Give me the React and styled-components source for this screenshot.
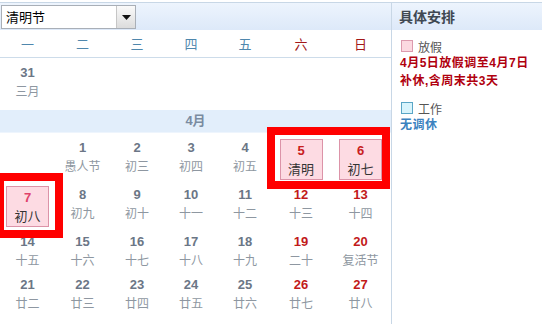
import React from "react";
import styled, { createGlobalStyle } from "styled-components";

const Global = createGlobalStyle`
  html, body { margin: 0; padding: 0; background: #fff; }
  body { font-family: "Liberation Sans", "Noto Sans CJK SC", sans-serif; }
`;

const Page = styled.div`
  width: 542px;
  height: 324px;
  overflow: hidden;
  padding-top: 2px;
  box-sizing: border-box;
  display: flex;
`;

const Frame = styled.div`
  display: flex;
  flex: 1;
  border-top: 1px solid #c8d7e6;
`;

const Calendar = styled.div`
  position: relative;
  width: 391px;
  flex: none;
  overflow: hidden;
`;

const Band = styled.div`
  height: 27px;
  background: linear-gradient(#edf4fd, #dde9f9);
  display: flex;
  align-items: flex-start;
  padding-top: ${(p) => p.$pt || 0}px;
  box-sizing: border-box;
`;

const Select = styled.div`
  margin-left: 1px;
  width: 135px;
  height: 24px;
  box-sizing: border-box;
  border: 1px solid #a9afb7;
  background: #fff;
  display: flex;
  align-items: stretch;
`;

const SelectText = styled.div`
  flex: 1;
  font-family: "Noto Sans CJK SC", sans-serif;
  font-size: 13px;
  line-height: 22px;
  padding-left: 4px;
  color: #000;
`;

const SelectButton = styled.div`
  width: 18px;
  border-left: 1px solid #c6c6c6;
  background: linear-gradient(#fafafa, #dcdcdc);
  display: flex;
  align-items: center;
  justify-content: center;
`;

const Grid = styled.div`
  display: grid;
  grid-template-columns: 55px 55px 54px 54px 54px 58px 61px;
  height: ${(p) => p.$h}px;
  box-sizing: border-box;
  border-bottom: ${(p) => (p.$line ? "1px solid #cddcea" : "none")};
`;

const WeekName = styled.div`
  text-align: center;
  font-family: "Noto Sans CJK SC", sans-serif;
  font-size: 13px;
  line-height: 27px;
  color: ${(p) => (p.$weekend ? "#a31818" : "#4f87ad")};
`;

const Cell = styled.div`
  display: flex;
  flex-direction: column;
  align-items: center;
  padding-top: 6px;
`;

const Num = styled.div`
  font-family: "Liberation Sans", sans-serif;
  font-weight: bold;
  font-size: 13px;
  line-height: 18px;
  color: ${(p) => (p.$red ? "#c21a1a" : "#6b7686")};
`;

const Lunar = styled.div`
  font-family: "Noto Sans CJK SC", sans-serif;
  font-size: 12px;
  line-height: 18px;
  color: #8e97a1;
  white-space: nowrap;
`;

const Holiday = styled.div`
  width: 43px;
  height: 41px;
  box-sizing: border-box;
  border: 1px solid #dc93a8;
  background: #fddbe3;
  display: flex;
  flex-direction: column;
  align-items: center;
  padding-top: 2px;
`;

const HolidayNum = styled(Num)`
  color: ${(p) => (p.$pink ? "#e0416a" : "#c8201e")};
`;

const HolidayLunar = styled(Lunar)`
  color: #333;
  font-size: 13px;
`;

const MonthBand = styled.div`
  height: 23px;
  background: #e2eefb;
  border-bottom: 1px solid #eef5fd;
  box-sizing: border-box;
  text-align: center;
  font-family: "Liberation Sans", "Noto Sans CJK SC", sans-serif;
  font-weight: bold;
  font-size: 13px;
  line-height: 22px;
  color: #7a8ba1;
`;

const Mark = styled.div`
  position: absolute;
  border: 8px solid #ff0000;
  box-sizing: border-box;
  pointer-events: none;
`;

const Side = styled.div`
  flex: 1;
  border-left: 1px solid #c8d7e6;
`;

const SideTitle = styled.div`
  padding-left: 7px;
  font-family: "Noto Sans CJK SC", sans-serif;
  font-weight: bold;
  font-size: 14px;
  line-height: 27px;
  color: #3f4852;
`;

const SideBody = styled.div`
  padding: 8px 6px 0 8px;
`;

const Legend = styled.div`
  display: flex;
  align-items: center;
  height: 16px;
  margin-top: ${(p) => p.$mt || 0}px;
  font-family: "Noto Sans CJK SC", sans-serif;
  font-size: 12px;
  color: #555;
`;

const Swatch = styled.span`
  width: 10px;
  height: 10px;
  margin: 0 5px 0 1px;
  border: 1px solid ${(p) => (p.$work ? "#5aa6c6" : "#dc9aae")};
  background: ${(p) => (p.$work ? "#d8f4fc" : "#fcd9e1")};
`;

const Note = styled.div`
  font-family: "Liberation Sans", "Noto Sans CJK SC", sans-serif;
  font-weight: bold;
  font-size: 12px;
  line-height: 18px;
  letter-spacing: 0.5px;
  white-space: nowrap;
  color: ${(p) => (p.$blue ? "#3b82bf" : "#b0000e")};
`;

const weekNames = ["一", "二", "三", "四", "五", "六", "日"];

const rows = [
  {
    h: 47,
    cells: [
      null,
      { n: "1", l: "愚人节" },
      { n: "2", l: "初三" },
      { n: "3", l: "初四" },
      { n: "4", l: "初五" },
      { n: "5", l: "清明", hol: true },
      { n: "6", l: "初七", hol: true },
    ],
  },
  {
    h: 47,
    cells: [
      { n: "7", l: "初八", hol: true, pink: true },
      { n: "8", l: "初九" },
      { n: "9", l: "初十" },
      { n: "10", l: "十一" },
      { n: "11", l: "十二" },
      { n: "12", l: "十三", red: true },
      { n: "13", l: "十四", red: true },
    ],
  },
  {
    h: 43,
    cells: [
      { n: "14", l: "十五" },
      { n: "15", l: "十六" },
      { n: "16", l: "十七" },
      { n: "17", l: "十八" },
      { n: "18", l: "十九" },
      { n: "19", l: "二十", red: true },
      { n: "20", l: "复活节", red: true },
    ],
  },
  {
    h: 54,
    cells: [
      { n: "21", l: "廿二" },
      { n: "22", l: "廿三" },
      { n: "23", l: "廿四" },
      { n: "24", l: "廿五" },
      { n: "25", l: "廿六" },
      { n: "26", l: "廿七", red: true },
      { n: "27", l: "廿八", red: true },
    ],
  },
];

function Day({ c }) {
  if (!c) return <Cell />;
  if (c.hol) {
    return (
      <Cell>
        <Holiday>
          <HolidayNum $pink={c.pink}>{c.n}</HolidayNum>
          <HolidayLunar>{c.l}</HolidayLunar>
        </Holiday>
      </Cell>
    );
  }
  return (
    <Cell>
      <Num $red={c.red}>{c.n}</Num>
      <Lunar>{c.l}</Lunar>
    </Cell>
  );
}

export default function App() {
  return (
    <>
      <Global />
      <Page>
        <Frame>
          <Calendar>
            <Band $pt={2}>
              <Select>
                <SelectText>清明节</SelectText>
                <SelectButton>
                  <svg width="9" height="5" viewBox="0 0 9 5">
                    <path d="M0 0 H9 L4.5 5 Z" fill="#111" />
                  </svg>
                </SelectButton>
              </Select>
            </Band>
            <Grid $h={28} $line>
              {weekNames.map((w, i) => (
                <WeekName key={w} $weekend={i >= 5}>
                  {w}
                </WeekName>
              ))}
            </Grid>
            <Grid $h={52}>
              <Day c={{ n: "31", l: "三月" }} />
            </Grid>
            <MonthBand>4月</MonthBand>
            {rows.map((r, i) => (
              <Grid key={i} $h={r.h}>
                {r.cells.map((c, j) => (
                  <Day key={j} c={c} />
                ))}
              </Grid>
            ))}
            <Mark style={{ left: 267, top: 124, width: 123, height: 62 }} />
            <Mark style={{ left: -4, top: 170, width: 67, height: 65 }} />
          </Calendar>
          <Side>
            <Band>
              <SideTitle>具体安排</SideTitle>
            </Band>
            <SideBody>
              <Legend>
                <Swatch />
                放假
              </Legend>
              <Note>4月5日放假调至4月7日</Note>
              <Note>补休,含周末共3天</Note>
              <Legend $mt={10}>
                <Swatch $work />
                工作
              </Legend>
              <Note $blue>无调休</Note>
            </SideBody>
          </Side>
        </Frame>
      </Page>
    </>
  );
}
